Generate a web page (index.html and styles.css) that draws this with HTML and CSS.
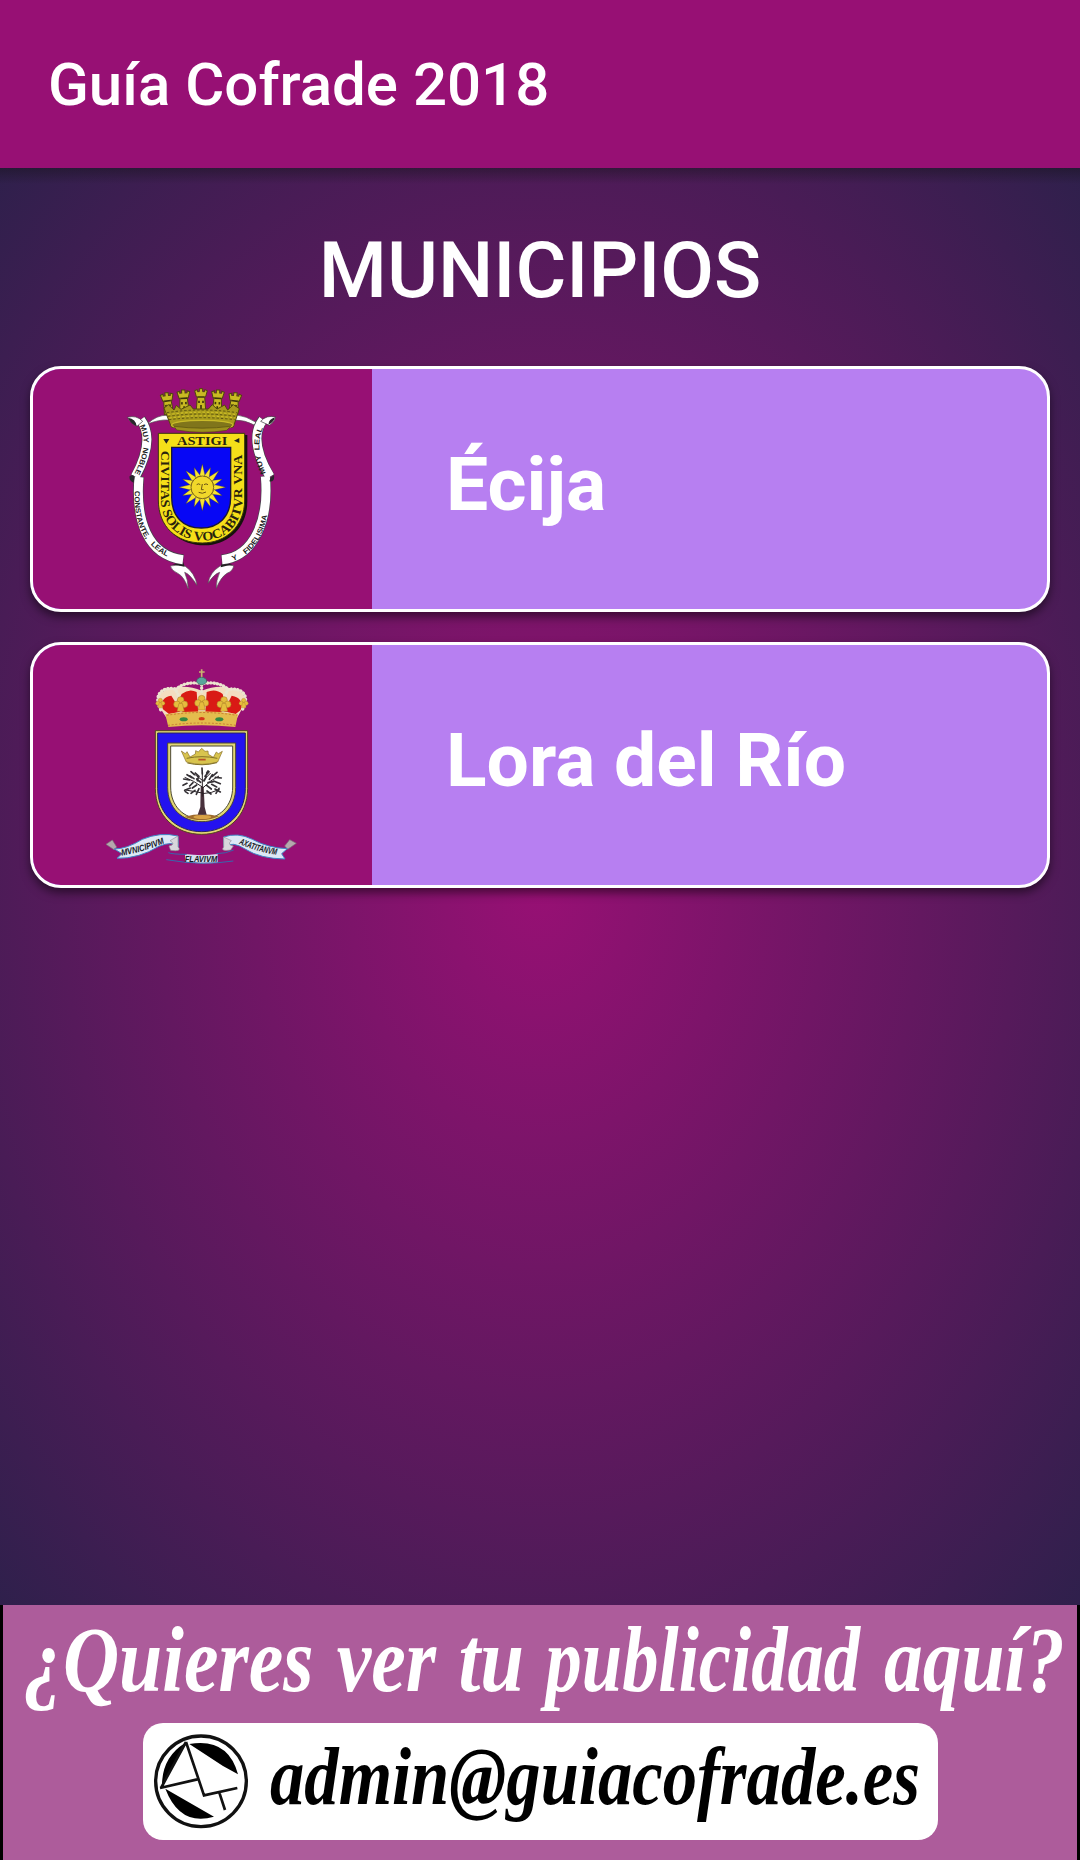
FILE: index.html
```html
<!DOCTYPE html>
<html lang="es">
<head>
<meta charset="utf-8">
<title>Guía Cofrade 2018</title>
<link rel="stylesheet" href="styles.css">
</head>
<body>
<header class="app-bar"><h1 class="app-title">Guía Cofrade 2018</h1></header>
<main class="content">
  <h2 class="heading">MUNICIPIOS</h2>
  <div class="cards">
    <article class="card">
      <div class="crest">
        <svg viewBox="-201 -3 1017 720" width="339" height="240" aria-label="Escudo de Écija">
          <defs>
            <path id="ray" d="M298 320L307 282L316 320Z"/>
            <path id="ray2" d="M299 318L307 288L315 318Z"/>
            <g id="tower"><path d="M-19 0L-11-3V3H-5V-6H5V3H11V-3L19 0L14 18H11L14 58H-14L-11 18H-14Z" fill="#c9ba22" stroke="#4e470d" stroke-width="3"/><path d="M-10 19H10M-6 30V37M6 30V37M0 43V55" stroke="#3b350b" stroke-width="5" fill="none"/></g>
            <path id="motto" d="M183 242V390C183 464 240 512 308 512C374 512 427 464 427 390V232"/>
            <path id="rib1" d="M117 165C138 200 137 244 102 314"/>
            <path id="rib2" d="M105 350C98 452 123 545 250 577"/>
            <path id="rib3" d="M506 328C465 250 474 190 500 158"/>
            <path id="rib4" d="M365 582C464 564 502 492 508 380"/>
          </defs>
          <!-- ribbon links behind the crown -->
          <path d="M142 162Q170 134 204 136L206 150Q178 148 142 162ZM406 134Q440 138 470 158L463 165Q436 150 404 150Z" fill="#fff" stroke="#555" stroke-width="2"/>
          <!-- forked ribbon tails -->
          <path d="M211 588Q238 582 255 588Q286 610 291 646Q270 612 254 607Q264 630 265 656Q252 620 235 611Q214 602 211 588ZM401 587Q376 582 360 588Q329 608 324 640Q342 612 359 607Q348 632 349 655Q362 622 381 610Q400 602 401 587Z" fill="#fff" stroke="#555" stroke-width="2"/>
          <path d="M216 583L254 590L250 577ZM366 577L398 583L362 592Z" fill="#222"/>
          <g fill="none" stroke="#45434a" stroke-width="31">
            <path d="M122 148C151 188 146 246 106 322M489 148C459 188 466 246 510 322"/>
            <path d="M117 320C106 450 142 556 250 569M496 318C508 450 462 560 365 569"/>
          </g>
          <g fill="none" stroke="#fff" stroke-width="27">
            <path d="M122 149C151 188 146 246 106 320M489 149C459 188 466 246 510 320"/>
            <path d="M117 321C106 450 142 556 249 569M496 319C508 450 462 560 366 569"/>
          </g>
          <path d="M82 142Q110 134 128 154L111 169Q94 163 82 142ZM527 141Q499 134 482 154L508 166Q523 157 527 141Z" fill="#fff" stroke="#333" stroke-width="2"/>
          <path d="M84 143Q108 146 110 169Q91 160 84 143ZM525 142Q504 149 506 164Q520 158 525 142ZM89 318Q101 312 104 320L101 338Q86 332 89 318ZM508 334Q525 337 522 315L512 323Z" fill="#29262b"/>
          <g class="ribbon-text">
            <text><textPath href="#rib1" textLength="150" lengthAdjust="spacingAndGlyphs" startOffset="3" xml:space="preserve">MUY  NOBLE</textPath></text>
            <text><textPath href="#rib2" textLength="235" lengthAdjust="spacingAndGlyphs" startOffset="12" xml:space="preserve">CONSTANTE,   LEAL</textPath></text>
            <text><textPath href="#rib3" textLength="140" lengthAdjust="spacingAndGlyphs" startOffset="20" xml:space="preserve">MUY  LEAL</textPath></text>
            <text><textPath href="#rib4" textLength="180" lengthAdjust="spacingAndGlyphs" startOffset="35" xml:space="preserve">Y    FIDELISIMA</textPath></text>
          </g>
          <!-- mural crown -->
          <use href="#tower" transform="translate(200 74) rotate(-7)"/><use href="#tower" transform="translate(250 66) rotate(-3)"/>
          <use href="#tower" transform="translate(406 74) rotate(7)"/><use href="#tower" transform="translate(354 66) rotate(3)"/><use href="#tower" transform="translate(303 62)"/>
          <path d="M192 114L205 104L222 120L229 106L243 118L270 105L280 117H325L337 104L351 117L374 105L383 120L400 104L418 116L400 171Q304 187 214 171Z" fill="#a89b1c" stroke="#514a0c" stroke-width="3"/>
          <g fill="none" stroke="#5b5210" stroke-width="3" stroke-dasharray="7 6"><path d="M201 128Q304 112 411 128M204 139Q304 125 408 139M207 149Q304 137 404 149"/></g>
          <g fill="none" stroke="#dac92a" stroke-width="3" stroke-dasharray="7 6"><path d="M204 134Q304 119 411 134M208 144Q304 131 406 144"/></g>
          <ellipse cx="307" cy="165" rx="92" ry="14" fill="#80751b" stroke="#cabb2a" stroke-width="4"/>
          <path d="M222 169Q307 180 392 169L380 181Q307 193 230 180Z" fill="#9d901e" stroke="#554b0d" stroke-width="2"/>
          <!-- shield -->
          <path d="M181 195H442V394C442 475 382 526 314 526C235 526 181 475 181 394Z" fill="#15120b"/>
          <path d="M175 190H434V390C434 470 376 519 307 519C229 519 175 470 175 390Z" fill="#f5df19" stroke="#3c360c" stroke-width="3"/>
          <path d="M215 232H392V382C392 440 355 474 304 474C250 474 215 440 215 382Z" fill="#0707f5" stroke="#18163b" stroke-width="4"/>
          <text class="shield-text" x="231" y="224" textLength="151" lengthAdjust="spacingAndGlyphs">ASTIGI</text>
          <path d="M190 207L208 207L199 221ZM418 204V219L402 212Z" fill="#222"/>
          <text class="shield-text"><textPath href="#motto" textLength="670" lengthAdjust="spacingAndGlyphs" startOffset="0">CIVITAS SOLIS VOCABITVR VNA</textPath></text>
          <g fill="#f6e432" stroke="#3e371a" stroke-width="1">
            <use href="#ray"/><use href="#ray" transform="rotate(45 307 352)"/><use href="#ray" transform="rotate(90 307 352)"/><use href="#ray" transform="rotate(135 307 352)"/><use href="#ray" transform="rotate(180 307 352)"/><use href="#ray" transform="rotate(225 307 352)"/><use href="#ray" transform="rotate(270 307 352)"/><use href="#ray" transform="rotate(315 307 352)"/>
            <use href="#ray2" transform="rotate(22.5 307 352)"/><use href="#ray2" transform="rotate(67.5 307 352)"/><use href="#ray2" transform="rotate(112.5 307 352)"/><use href="#ray2" transform="rotate(157.5 307 352)"/><use href="#ray2" transform="rotate(202.5 307 352)"/><use href="#ray2" transform="rotate(247.5 307 352)"/><use href="#ray2" transform="rotate(292.5 307 352)"/><use href="#ray2" transform="rotate(337.5 307 352)"/>
          </g>
          <circle cx="307" cy="352" r="34" fill="#f1d82a" stroke="#80671a" stroke-width="3"/>
          <path d="M290 344Q296 339 301 344M312 344Q318 339 324 344M307 342L304 359H311M296 367Q307 373 318 366" fill="none" stroke="#6c5415" stroke-width="3"/>
        </svg>
      </div>
      <div class="name">Écija</div>
    </article>
    <article class="card">
      <div class="crest">
        <svg viewBox="-171 -15 1017 720" width="339" height="240" aria-label="Escudo de Lora del Río">
          <defs>
            <g id="flower"><circle cx="0" cy="-10" r="10"/><circle cx="-11" cy="3" r="10"/><circle cx="11" cy="3" r="10"/><path d="M-5 0H5L11 24H-11Z"/></g>
            <path id="m1" d="M95 617Q160 606 225 579"/><path id="m3" d="M446 581Q500 606 562 615"/>
          </defs>
          <!-- royal crown -->
          <path d="M205 166Q196 124 246 115Q290 103 335 122Q384 103 423 115Q475 124 462 166L439 208H232Z" fill="#f3ddc0"/>
          <path d="M219 178Q208 142 244 137Q260 160 270 185L237 192ZM275 132Q298 114 320 126L325 190H279Q262 150 275 132ZM350 126Q377 114 398 132Q407 152 393 190H346ZM425 137Q463 144 452 180L437 192L402 184Z" fill="#d91a15"/>
          <g fill="none" stroke="#ece5cf" stroke-width="10" stroke-linecap="round" stroke-dasharray="1 9"><path d="M212 179C188 133 218 111 253 116Q266 127 270 162M257 119Q285 92 335 101Q385 92 416 119M458 177C482 133 452 112 416 118Q403 130 402 162M335 104V132"/></g>
          <path d="M335 58V86M327 66H344" stroke="#c8b270" stroke-width="5"/><ellipse cx="335" cy="93" rx="15" ry="11" fill="#5aa59b" stroke="#36605b" stroke-width="2"/>
          <g fill="#e6bd3d" stroke="#a57927" stroke-width="1.5"><use href="#flower" transform="translate(272 160)"/><use href="#flower" transform="translate(335 156)"/><use href="#flower" transform="translate(402 160)"/><use href="#flower" transform="translate(211 158) scale(.65)"/><use href="#flower" transform="translate(461 158) scale(.65)"/></g>
          <path d="M226 193Q335 174 444 193L436 231Q335 220 235 231Z" fill="#e4bc4d"/>
          <path d="M230 196Q335 179 440 196M234 226Q335 212 437 226" fill="none" stroke="#ba5a28" stroke-width="2" stroke-dasharray="6 5"/>
          <ellipse cx="281" cy="208" rx="12" ry="6" fill="#338842"/><ellipse cx="388" cy="208" rx="12" ry="6" fill="#338842"/><ellipse cx="335" cy="206" rx="9" ry="5" fill="#d4371b"/>
          <!-- shield -->
          <path d="M196 242H473V415C473 500 411 553 335 553C258 553 196 500 196 415Z" fill="#e4d873" stroke="#55431d" stroke-width="3"/>
          <path d="M203 249H466V415C466 494 407 545 335 545C262 545 203 494 203 415Z" fill="#2412ef" stroke="#29215c" stroke-width="3"/>
          <path d="M233 279H437V412C437 474 394 515 336 515C276 515 233 474 233 412Z" fill="#e0d674" stroke="#4f4930" stroke-width="3"/>
          <path d="M242 288H428V411C428 468 388 507 336 507C281 507 242 468 242 411Z" fill="#fff" stroke="#4d4935" stroke-width="3"/>
          <path d="M284 500Q335 486 387 499Q364 510 336 510Q306 510 284 500Z" fill="#9e6b2d"/>
          <ellipse cx="337" cy="501" rx="27" ry="6" fill="#d8a346"/>
          <g stroke="#8a7027" stroke-width="2" fill="#d8c44e"><path d="M274 303L286 311L291 305L300 321L316 312L317 302L325 306L335 295L345 304L354 303L355 313L370 322L379 306L385 311L397 304L383 336Q336 350 289 336Z"/><path d="M290 325Q336 315 382 325M292 339Q336 350 381 338" fill="none" stroke="#817126" stroke-width="3"/></g>
          <path d="M325 329H347" stroke="#b85227" stroke-width="5"/>
          <!-- olive tree -->
          <path d="M332 410H341L344 471L350 494H323L331 471Z" fill="#49313c"/>
          <path d="M337 440V365M337 429Q310 424 287 420M337 431Q365 430 389 418M337 411Q310 391 284 382M337 415Q362 390 387 378M337 391L309 369M337 394L362 369" fill="none" stroke="#292226" stroke-width="3"/>
          <g fill="none" stroke="#343035" stroke-width="5" stroke-linecap="round"><path d="M337 372L336 354M327 379L316 369M345 379L357 365M313 374L303 365M306 383L291 374M298 390L281 387M291 400L279 406M309 398L299 408M320 405L307 414M301 414L284 421M315 421L303 430M327 416L319 433M294 430L286 425M350 406L364 417M351 423L363 432M365 403L380 411M371 393L391 401M376 382L394 384M367 379L381 367M358 388L367 374M375 417L391 426M378 430L387 415M342 393L349 380M332 397L320 387M322 392L326 379M354 398L370 395M350 369L354 363M312 386L300 378"/></g>
          <!-- banner -->
          <path d="M48 583L67 570L80 591L72 599ZM619 580L599 569L584 588L593 598Z" fill="#b6a7ae" stroke="#777" stroke-width="2"/>
          <path d="M73 597Q110 597 157 568Q211 545 264 558L265 590Q247 572 207 589Q146 626 81 625L96 611ZM401 561Q443 546 487 568Q534 594 592 596L575 611L585 627Q511 626 467 598Q428 572 402 590Z" fill="#dde9f6" stroke="#3e87c7" stroke-width="3"/>
          <path d="M264 558V590Q278 606 242 601L237 588Q259 583 240 572ZM401 561V591Q389 605 422 600L430 588Q410 584 424 572Z" fill="#d8d6dc" stroke="#93909a" stroke-width="2"/>
          <path d="M285 612Q335 619 383 612V638Q335 643 285 637Z" fill="#d5dff0"/><path d="M235 608Q247 613 290 613M379 611Q407 611 431 600M229 629Q335 648 430 633" fill="none" stroke="#3767ad" stroke-width="3"/>
          <g class="banner-text"><text><textPath href="#m1" textLength="134" lengthAdjust="spacingAndGlyphs">MVNICIPIVM</textPath></text><text x="284" y="635" textLength="98" lengthAdjust="spacingAndGlyphs">FLAVIVM</text><text><textPath href="#m3" textLength="119" lengthAdjust="spacingAndGlyphs">AXATITANVM</textPath></text></g>
        </svg>
      </div>
      <div class="name">Lora del Río</div>
    </article>
  </div>
</main>
<footer class="ad">
  <svg class="ad-question" viewBox="3 1605 1074 118" width="1074" height="118">
    <g transform="scale(.8 1)">
      <text x="30" y="1691" textLength="362" lengthAdjust="spacingAndGlyphs">¿Quieres</text>
      <text x="421" y="1691" textLength="124" lengthAdjust="spacingAndGlyphs">ver</text>
      <text x="573" y="1691" textLength="82" lengthAdjust="spacingAndGlyphs">tu</text>
      <text x="682" y="1691" textLength="393" lengthAdjust="spacingAndGlyphs">publicidad</text>
      <text x="1105" y="1691" textLength="226" lengthAdjust="spacingAndGlyphs">aquí?</text>
    </g>
  </svg>
  <div class="ad-contact">
    <svg viewBox="36 38 294 296" width="98" height="98.7">
      <circle cx="183" cy="186" r="136" fill="#fff" stroke="#111" stroke-width="10"/>
      <path d="M148 74Q264 54 294 165L249 140ZM134 72L66 204Q64 116 134 72ZM76 208L222 292Q120 322 76 208Z"/>
      <path d="M138 68L192 228L292 206M60 206L172 180M238 220L255 272M138 68L63 206" fill="none" stroke="#111" stroke-width="8"/>
    </svg>
    <svg viewBox="0 0 670 116" width="670" height="116" class="ad-mail"><text x="16" y="80" textLength="650" lengthAdjust="spacingAndGlyphs">admin@guiacofrade.es</text></svg>
  </div>
</footer>
</body>
</html>
```
FILE: styles.css
```css
* { box-sizing: border-box; }
body {
  margin: 0;
  width: 1080px;
  height: 1860px;
  display: flex;
  flex-direction: column;
  overflow: hidden;
  font-family: Roboto, sans-serif;
  color: #fff;
}
.app-bar {
  height: 168px;
  flex: none;
  padding: 2px 0 0 48px;
  display: flex;
  align-items: center;
  background: #971074;
}
.app-title {
  margin: 0;
  font-size: 60px;
  font-weight: 500;
  line-height: 70px;
}
.content {
  height: 1437px;
  flex: none;
  padding: 57px 30px 0;
  background:
    linear-gradient(rgba(25, 20, 30, .5), rgba(25, 20, 30, 0)) 0 0 / 100% 16px no-repeat,
    radial-gradient(#971074, #2f204c);
}
.heading {
  margin: 0 0 49px;
  font-size: 78px;
  font-weight: 500;
  line-height: 92px;
  text-align: center;
}
.cards {
  display: flex;
  flex-direction: column;
  gap: 30px;
}
.card {
  height: 246px;
  display: flex;
  overflow: hidden;
  border: 3px solid #fff;
  border-radius: 31px;
  background: #b77ff1;
  box-shadow: 0 5px 10px rgba(0, 0, 0, .5);
}
.crest {
  width: 339px;
  flex: none;
  background: #971074;
}
.crest svg { display: block; }
.name {
  padding: 71px 0 0 74px;
  font-size: 75px;
  font-weight: 700;
  line-height: 88px;
}
.shield-text {
  font: 700 39px "Liberation Serif", serif;
  fill: #29230d;
}
.ribbon-text {
  font: 700 22px "Liberation Sans", sans-serif;
  fill: #222;
}
.banner-text {
  font: italic 700 27px "Liberation Sans", sans-serif;
  fill: #17171c;
}
.ad {
  height: 255px;
  flex: none;
  border: solid #000;
  border-width: 0 3px;
  background: #ad5c9b;
}
.ad svg {
  display: block;
  flex: none;
  overflow: visible;
}
.ad-question {
  font: italic 700 94px "Liberation Serif", serif;
  fill: #fff;
}
.ad-contact {
  width: 795px;
  height: 117px;
  margin-left: 140px;
  padding-left: 9px;
  display: flex;
  align-items: center;
  gap: 4px;
  border-radius: 20px;
  background: #fff;
}
.ad-mail {
  font: italic 700 82px "Liberation Serif", serif;
  fill: #000;
}
```
